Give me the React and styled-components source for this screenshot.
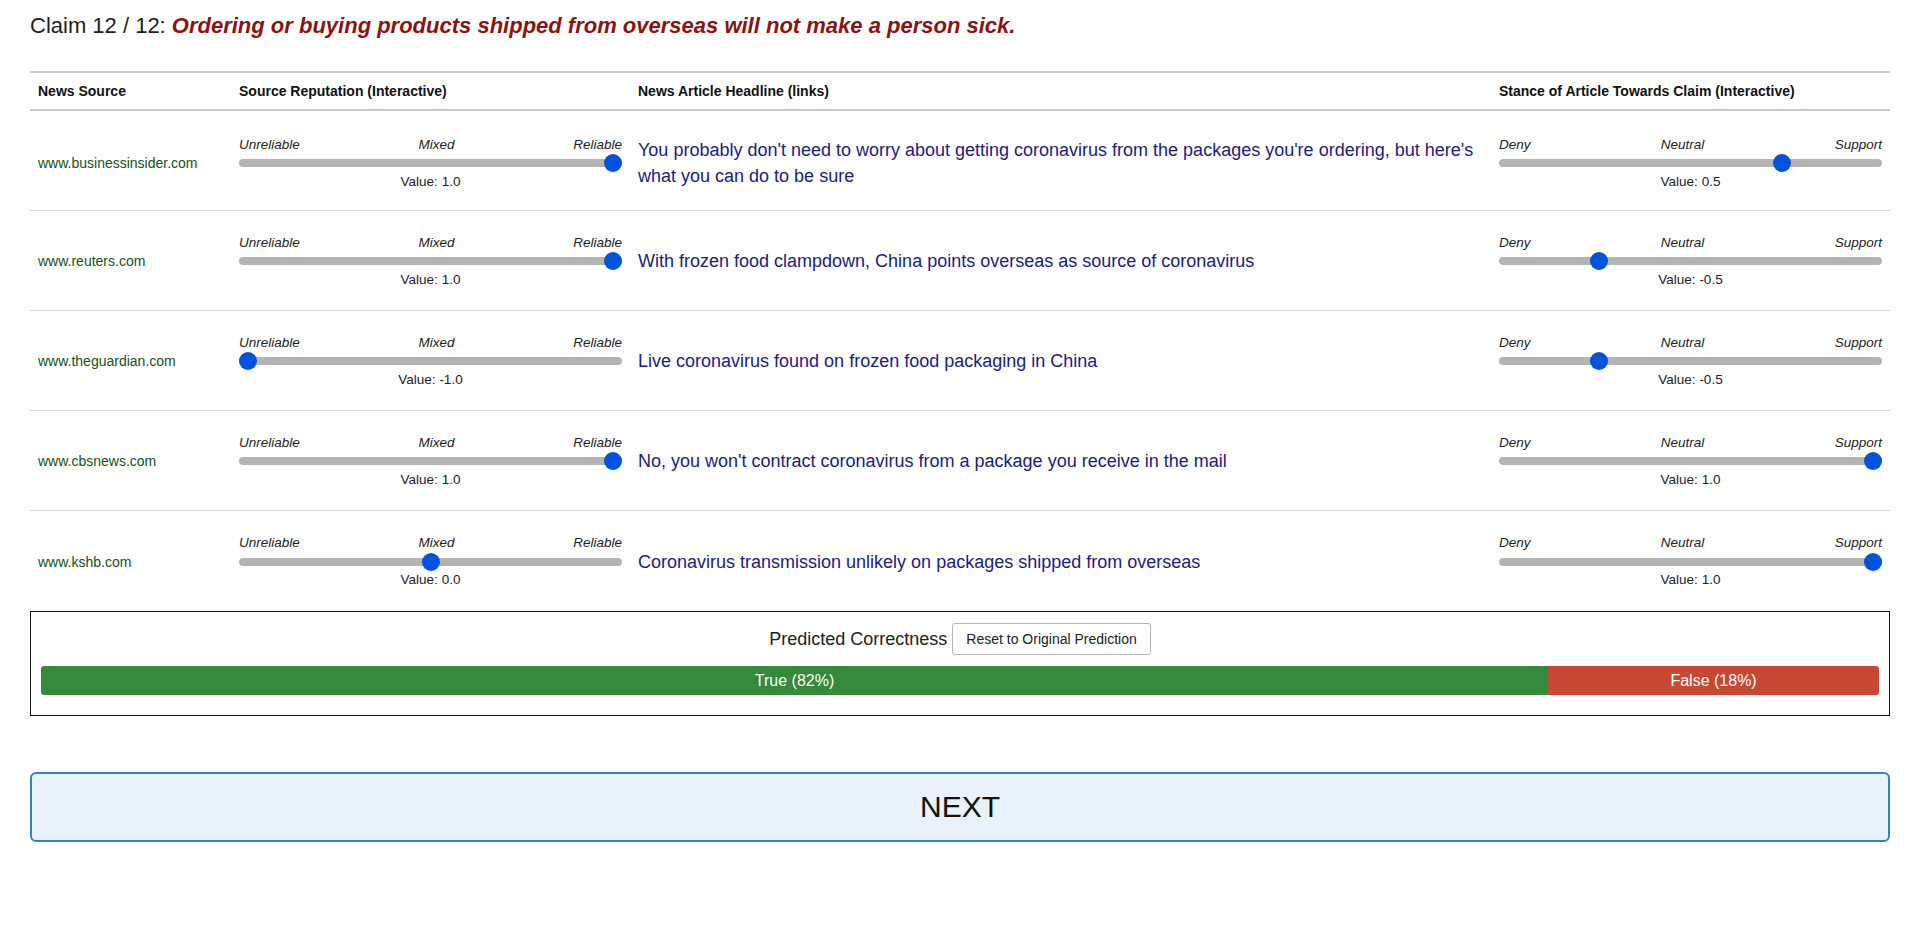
import { useState } from "react";
import styled, { createGlobalStyle } from "styled-components";

const GlobalStyle = createGlobalStyle`
  body {
    margin: 0;
    background: #fff;
    font-family: "Liberation Sans", Arial, sans-serif;
    color: #222;
  }
`;

const Page = styled.div`
  padding: 13px 30px 40px;
`;

const Title = styled.h2`
  margin: 0 0 32px;
  font-size: 22px;
  font-weight: normal;
  line-height: 26px;
  color: #1e1e1e;
  em {
    color: #8e1111;
    font-weight: bold;
  }
`;

const Grid = styled.div`
  display: grid;
  grid-template-columns: 201px 399px 1fr 399px;
  border-top: 2px solid #cbcbcb;
`;

const HeadCell = styled.div`
  padding: 0 8px;
  height: 36px;
  display: flex;
  align-items: center;
  font-size: 14px;
  font-weight: bold;
  color: #111;
  border-bottom: 2px solid #cbcbcb;
`;

const Cell = styled.div`
  padding: ${(p) => (p.$first ? "5px" : "1px")} 8px 0;
  height: 100px;
  box-sizing: border-box;
  display: flex;
  flex-direction: column;
  justify-content: center;
  border-bottom: ${(p) => (p.$last ? "none" : "1px solid #d9d9d9")};
`;

const Source = styled.span`
  font-size: 14px;
  color: #0f5417;
`;

const Headline = styled.a`
  font-size: 18px;
  line-height: 26px;
  color: #1b1b84;
  text-decoration: none;
`;

const SliderWrap = styled.div`
  display: flex;
  flex-direction: column;
  gap: 1.5px;
`;

const Labels = styled.div`
  display: flex;
  justify-content: space-between;
  font-size: 13.5px;
  font-style: italic;
  line-height: 16px;
  color: #222;
`;

const Range = styled.input.attrs({ type: "range" })`
  -webkit-appearance: none;
  appearance: none;
  display: block;
  width: 100%;
  height: 18px;
  margin: 0;
  background: transparent;
  cursor: pointer;

  &::-webkit-slider-runnable-track {
    height: 8px;
    background: #b4b4b4;
    border-radius: 4px;
  }
  &::-webkit-slider-thumb {
    -webkit-appearance: none;
    width: 18px;
    height: 18px;
    border-radius: 50%;
    border: none;
    background: #0153de;
    margin-top: -5px;
  }
`;

const ValueText = styled.div`
  text-align: center;
  font-size: 13.5px;
  line-height: 16px;
  color: #222;
`;

const PredictBox = styled.div`
  border: 1px solid #111;
  padding: 11px 10px 20px;
  display: flex;
  flex-direction: column;
  gap: 11px;
`;

const PredictHead = styled.div`
  display: flex;
  justify-content: center;
  align-items: center;
  gap: 5px;
  font-size: 18px;
  color: #222;
`;

const ResetButton = styled.button`
  font-family: "Liberation Sans", Arial, sans-serif;
  font-size: 14px;
  color: #222;
  background: #fff;
  border: 1px solid #b5b5b5;
  border-radius: 3px;
  height: 32px;
  padding: 0 13px;
  cursor: pointer;
`;

const Bar = styled.div`
  display: flex;
  height: 29px;
  border-radius: 3px;
  overflow: hidden;
`;

const BarPart = styled.div`
  display: flex;
  align-items: center;
  justify-content: center;
  color: #fff;
  font-size: 16px;
  background: ${(p) => (p.$true ? "#35893a" : "#c94834")};
`;

const NextButton = styled.button`
  display: block;
  width: 100%;
  margin-top: 56px;
  height: 70px;
  background: #e9f2fb;
  border: 2px solid #2e88b3;
  border-radius: 6px;
  font-family: "Liberation Sans", Arial, sans-serif;
  font-size: 30px;
  color: #111;
  cursor: pointer;
`;

const rows = [
  {
    source: "www.businessinsider.com",
    rep: 1,
    headline:
      "You probably don't need to worry about getting coronavirus from the packages you're ordering, but here's what you can do to be sure",
    stance: 0.5,
  },
  {
    source: "www.reuters.com",
    rep: 1,
    headline: "With frozen food clampdown, China points overseas as source of coronavirus",
    stance: -0.5,
  },
  {
    source: "www.theguardian.com",
    rep: -1,
    headline: "Live coronavirus found on frozen food packaging in China",
    stance: -0.5,
  },
  {
    source: "www.cbsnews.com",
    rep: 1,
    headline: "No, you won't contract coronavirus from a package you receive in the mail",
    stance: 1,
  },
  {
    source: "www.kshb.com",
    rep: 0,
    headline: "Coronavirus transmission unlikely on packages shipped from overseas",
    stance: 1,
  },
];

const Slider = ({ labels, initial }) => {
  const [value, setValue] = useState(initial);
  return (
    <SliderWrap>
      <Labels>
        {labels.map((l) => (
          <span key={l}>{l}</span>
        ))}
      </Labels>
      <Range
        min={-1}
        max={1}
        step={0.1}
        value={value}
        onChange={(e) => setValue(parseFloat(e.target.value))}
      />
      <ValueText>Value: {value.toFixed(1)}</ValueText>
    </SliderWrap>
  );
};

const App = () => {
  const truePct = 82;
  return (
    <Page>
      <GlobalStyle />
      <Title>
        Claim 12 / 12: <em>Ordering or buying products shipped from overseas will not make a person sick.</em>
      </Title>

      <Grid>
        <HeadCell>News Source</HeadCell>
        <HeadCell>Source Reputation (Interactive)</HeadCell>
        <HeadCell>News Article Headline (links)</HeadCell>
        <HeadCell>Stance of Article Towards Claim (Interactive)</HeadCell>
        {rows.map((r, i) => {
          const last = i === rows.length - 1;
          const first = i === 0;
          return [
            <Cell key={r.source + "s"} $first={first} $last={last}>
              <Source>{r.source}</Source>
            </Cell>,
            <Cell key={r.source + "r"} $first={first} $last={last}>
              <Slider labels={["Unreliable", "Mixed", "Reliable"]} initial={r.rep} />
            </Cell>,
            <Cell key={r.source + "h"} $first={first} $last={last}>
              <Headline href="#">{r.headline}</Headline>
            </Cell>,
            <Cell key={r.source + "t"} $first={first} $last={last}>
              <Slider labels={["Deny", "Neutral", "Support"]} initial={r.stance} />
            </Cell>,
          ];
        })}
      </Grid>

      <PredictBox>
        <PredictHead>
          Predicted Correctness
          <ResetButton>Reset to Original Prediction</ResetButton>
        </PredictHead>
        <Bar>
          <BarPart $true style={{ width: `${truePct}%` }}>True ({truePct}%)</BarPart>
          <BarPart style={{ width: `${100 - truePct}%` }}>False ({100 - truePct}%)</BarPart>
        </Bar>
      </PredictBox>

      <NextButton>NEXT</NextButton>
    </Page>
  );
};

export default App;
